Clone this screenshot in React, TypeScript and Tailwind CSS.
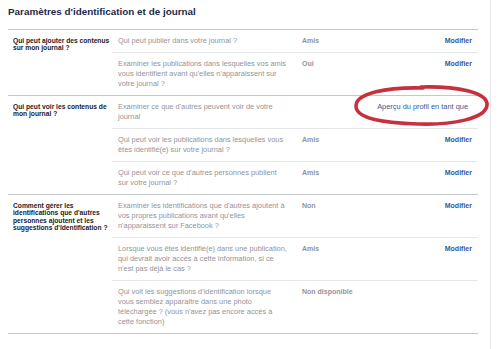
type Row = { q: string[]; value: string; action: string; preview?: boolean };

const sections: { label: string[]; rows: Row[] }[] = [
  {
    label: ["Qui peut ajouter des contenus", "sur mon journal ?"],
    rows: [
      { q: ["Qui peut publier dans votre journal ?"], value: "Amis", action: "Modifier" },
      {
        q: [
          "Examiner les publications dans lesquelles vos amis",
          "vous identifient avant qu'elles n'apparaissent sur",
          "votre journal ?",
        ],
        value: "Oui",
        action: "Modifier",
      },
    ],
  },
  {
    label: ["Qui peut voir les contenus de", "mon journal ?"],
    rows: [
      {
        q: ["Examiner ce que d'autres peuvent voir de votre", "journal"],
        value: "",
        action: "Aperçu du profil en tant que",
        preview: true,
      },
      {
        q: ["Qui peut voir les publications dans lesquelles vous", "êtes identifié(e) sur votre journal ?"],
        value: "Amis",
        action: "Modifier",
      },
      {
        q: ["Qui peut voir ce que d'autres personnes publient", "sur votre journal ?"],
        value: "Amis",
        action: "Modifier",
      },
    ],
  },
  {
    label: [
      "Comment gérer les",
      "identifications que d'autres",
      "personnes ajoutent et les",
      "suggestions d'identification ?",
    ],
    rows: [
      {
        q: [
          "Examiner les identifications que d'autres ajoutent à",
          "vos propres publications avant qu'elles",
          "n'apparaissent sur Facebook ?",
        ],
        value: "Non",
        action: "Modifier",
      },
      {
        q: [
          "Lorsque vous êtes identifié(e) dans une publication,",
          "qui devrait avoir accès à cette information, si ce",
          "n'est pas déjà le cas ?",
        ],
        value: "Amis",
        action: "Modifier",
      },
      {
        q: [
          "Qui voit les suggestions d'identification lorsque",
          "vous semblez apparaître dans une photo",
          "téléchargée ? (vous n'avez pas encore accès à",
          "cette fonction)",
        ],
        value: "Non disponible",
        action: "",
      },
    ],
  },
];

export default function App() {
  return (
    <div className="w-[500px] h-[349px] bg-white overflow-hidden font-['Liberation_Sans',Arial,sans-serif]">
      <div className="relative w-[491px] h-[349px] border-r border-[#e4e6ea] pl-[8px] pr-[12px]">
        {/* Title */}
        <h1 className="pt-[5px] h-[29px] text-[9.9px] leading-[14px] font-bold text-[#1d2a47]">
          Paramètres d'identification et de journal
        </h1>

        {/* Table */}
        <div className="border-t border-[#c4c7cc]">
          {sections.map((section, si) => (
            <div key={si} className="flex border-b border-[#c4c7cc]">
              <div className="w-[104px] shrink-0 pl-[5px] pt-[7px] text-[6.7px] leading-[7.4px] font-bold text-[#1d2129] whitespace-nowrap">
                {section.label.map((line, li) => (
                  <div key={li}>{line}</div>
                ))}
              </div>
              <div className="flex-1">
                {section.rows.map((row, ri) => (
                  <div
                    key={ri}
                    className={`flex py-[6px] pl-[6px] pr-[6px] text-[7.4px] leading-[10px] ${
                      ri > 0 ? "border-t border-[#e5e6e9]" : ""
                    }`}
                  >
                    <div className="w-[174px] shrink-0 text-[#90949c] whitespace-nowrap">
                      {row.q.map((line, li) => (
                        <div key={li}>{line}</div>
                      ))}
                    </div>
                    <div className="w-[60px] shrink-0 pl-[10px] font-bold text-[7px] text-[#90949c] whitespace-nowrap">
                      {row.value}
                    </div>
                    <div className="flex-1 flex justify-end">
                      {row.preview ? (
                        <span className="text-[#365899] whitespace-nowrap pr-[4px]">{row.action}</span>
                      ) : (
                        <span className="font-bold text-[7px] text-[#365899]">{row.action}</span>
                      )}
                    </div>
                  </div>
                ))}
              </div>
            </div>
          ))}
        </div>

        {/* Hand-drawn highlight round the preview link */}
        <svg
          className="absolute left-[351px] top-[83px] pointer-events-none"
          width="142"
          height="46"
          viewBox="0 0 142 46"
        >
          <path
            d="M70 4 C 105 3, 137 9, 136 22 C 135 36, 100 42, 68 41 C 34 40, 5 36, 5 23 C 5 10, 36 4, 72 5"
            fill="none"
            stroke="#c8303e"
            strokeWidth="3.6"
            strokeLinecap="round"
          />
        </svg>
      </div>
    </div>
  );
}
